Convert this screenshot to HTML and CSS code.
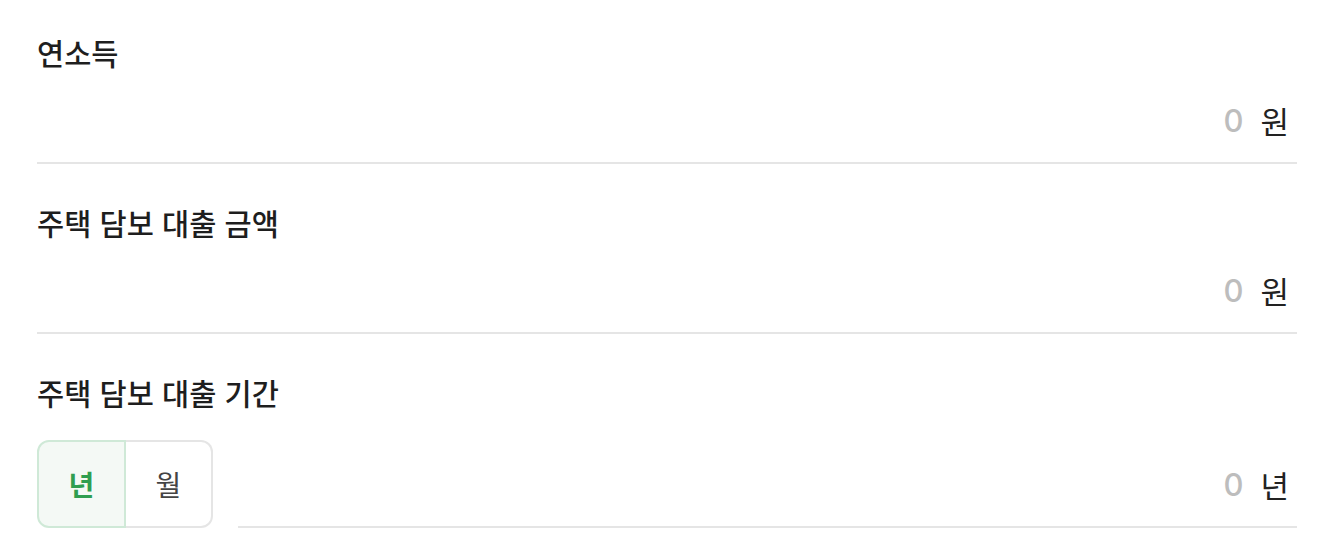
FILE: index.html
```html
<!DOCTYPE html>
<html lang="ko">
<head>
<meta charset="utf-8">
<link rel="stylesheet" href="styles.css">
</head>
<body>
<div class="form">
  <div class="section">
    <div class="label">연소득</div>
    <div class="input"><span class="num">0</span><span class="unit">원</span></div>
  </div>
  <div class="section">
    <div class="label">주택 담보 대출 금액</div>
    <div class="input"><span class="num">0</span><span class="unit">원</span></div>
  </div>
  <div class="section">
    <div class="label">주택 담보 대출 기간</div>
    <div class="row">
      <div class="toggle">
        <div class="opt active">년</div>
        <div class="opt">월</div>
      </div>
      <div class="input input-grow"><span class="num">0</span><span class="unit">년</span></div>
    </div>
  </div>
</div>
</body>
</html>
```
FILE: styles.css
```css
html, body { margin: 0; padding: 0; background: #fff; }
body {
  font-family: "Noto Sans CJK KR", "Noto Sans", sans-serif;
  color: #222;
}
.form { padding: 0 29px 0 37px; }
.section { padding-top: 38px; }
.section:first-child { padding-top: 32px; }
.label {
  font-size: 29.5px;
  line-height: 40px;
  font-weight: 500;
  color: #1e1e1e;
  margin-bottom: 5px;
}
.input {
  height: 87px;
  box-sizing: border-box;
  border-bottom: 2px solid #e5e5e5;
  display: flex;
  align-items: center;
  justify-content: flex-end;
  padding: 2px 8px 0 0;
  font-size: 31px;
  line-height: 40px;
}
.num { color: #bdbdbd; font-family: "Inter", "Noto Sans", sans-serif; font-weight: 500; }
.unit { margin-left: 17px; color: #222; }
.row { display: flex; align-items: stretch; margin-top: 28px; }
.input-grow { flex: 1; margin-left: 25px; height: 88px; padding-top: 4px; }
.toggle {
  display: flex;
  width: 176px;
  height: 88px;
}
.opt {
  flex: 1;
  display: flex;
  align-items: center;
  justify-content: center;
  font-size: 28px;
  color: #444;
  box-sizing: border-box;
  border: 2px solid #e5e5e5;
  border-left: none;
  border-radius: 0 12px 12px 0;
}
.opt.active {
  background: #f4f9f5;
  color: #2f9e50;
  font-weight: 700;
  border: 2px solid #cfe9d7;
  border-radius: 12px 0 0 12px;
}
```
